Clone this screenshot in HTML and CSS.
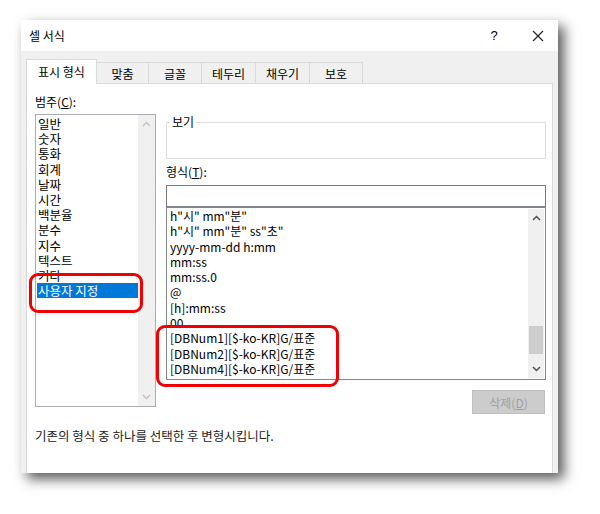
FILE: index.html
```html
<html><head>
<meta charset="UTF-8">
<meta name="viewport" content="width=device-width, initial-scale=1.0">
<title>셀 서식</title>
<link rel="stylesheet" href="styles.css">
</head>
<body>
<div class="dialog">
    <div class="titlebar">
        <span class="title">셀 서식</span>
        <span class="tb-btn help">?</span>
        <span class="tb-btn close">
            <svg width="12" height="12" viewBox="0 0 12 12"><path d="M1 1L11 11M11 1L1 11" stroke="#222" stroke-width="1.2" fill="none"/></svg>
        </span>
    </div>

    <div class="dlg-body">
        <div class="tabs">
            <div class="tab active">표시 형식</div>
            <div class="tab w52">맞춤</div>
            <div class="tab w53">글꼴</div>
            <div class="tab w54">테두리</div>
            <div class="tab w54">채우기</div>
            <div class="tab w53">보호</div>
        </div>

        <div class="panel">
            <div class="cols">
                <!-- category list -->
                <div class="col-left">
                    <div class="label">범주(<u>C</u>):</div>
                    <div class="listbox cat-list">
                        <ul class="items">
                            <li>일반</li>
                            <li>숫자</li>
                            <li>통화</li>
                            <li>회계</li>
                            <li>날짜</li>
                            <li>시간</li>
                            <li>백분율</li>
                            <li>분수</li>
                            <li>지수</li>
                            <li>텍스트</li>
                            <li>기타</li>
                            <li class="selected">사용자 지정</li>
                        </ul>
                        <div class="vscroll off">
                            <svg class="arrow" width="9" height="6" viewBox="0 0 9 6"><path d="M1 5L4.5 1.5L8 5" stroke="#c2c2c2" stroke-width="1.5" fill="none"/></svg>
                            <div class="track"></div>
                            <svg class="arrow" width="9" height="6" viewBox="0 0 9 6"><path d="M1 1L4.5 4.5L8 1" stroke="#c2c2c2" stroke-width="1.5" fill="none"/></svg>
                        </div>
                    </div>
                </div>

                <!-- format side -->
                <div class="col-right">
                    <fieldset class="preview"><legend>보기</legend></fieldset>
                    <div class="label fmt-label">형식(<u>T</u>):</div>
                    <div class="textbox"></div>
                    <div class="listbox fmt-list">
                        <ul class="items">
                            <li>h"시" mm"분"</li>
                            <li>h"시" mm"분" ss"초"</li>
                            <li>yyyy-mm-dd h:mm</li>
                            <li>mm:ss</li>
                            <li>mm:ss.0</li>
                            <li>@</li>
                            <li>[h]:mm:ss</li>
                            <li>00</li>
                            <li>[DBNum1][$-ko-KR]G/표준</li>
                            <li>[DBNum2][$-ko-KR]G/표준</li>
                            <li>[DBNum4][$-ko-KR]G/표준</li>
                        </ul>
                        <div class="vscroll">
                            <svg class="arrow" width="9" height="6" viewBox="0 0 9 6"><path d="M1 5L4.5 1.5L8 5" stroke="#505050" stroke-width="1.5" fill="none"/></svg>
                            <div class="track"><div class="thumb"></div></div>
                            <svg class="arrow" width="9" height="6" viewBox="0 0 9 6"><path d="M1 1L4.5 4.5L8 1" stroke="#505050" stroke-width="1.5" fill="none"/></svg>
                        </div>
                    </div>
                    <button class="btn-delete" disabled>삭제(<u>D</u>)</button>
                </div>
            </div>

            <p class="note">기존의 형식 중 하나를 선택한 후 변형시킵니다.</p>

            <!-- red highlight marks drawn over the dialog -->
            <div class="mark mark-cat"></div>
            <div class="mark mark-fmt"></div>
        </div>
    </div>
</div>
</body></html>
```

FILE: styles.css
```css
body {
    margin: 0;
    background: #fff;
    font-family: "Noto Sans CJK KR", "Noto Sans", sans-serif;
    font-size: 12px;
    color: #000;
}

.dialog {
    margin: 20px 0 0 21px;
    width: 537px;
    height: 453px;
    background: #f0f0f0;
    box-shadow: 6px 6px 12px rgba(0, 0, 0, 0.65);
}

.titlebar {
    height: 31px;
    background: #fff;
    display: flex;
    align-items: center;
}

.title {
    flex: 1;
    padding-left: 8px;
}

.tb-btn {
    height: 31px;
    display: flex;
    justify-content: center;
    align-items: center;
}

.help {
    width: 44px;
    margin-right: 2px;
    font-family: "Liberation Sans", sans-serif;
    font-size: 13px;
}

.close {
    width: 40px;
}

.dlg-body {
    padding: 8px 5px 0 5px;
}

.tabs {
    display: flex;
    align-items: flex-end;
    height: 24px;
}

.tab {
    box-sizing: border-box;
    height: 21px;
    border: 1px solid #d9d9d9;
    border-bottom: none;
    margin-left: -1px;
    display: flex;
    justify-content: center;
    align-items: center;
    background: #f0f0f0;
}

.tab.active {
    width: 71px;
    height: 25px;
    margin-left: 0;
    margin-bottom: -1px;
    background: #fff;
    position: relative;
    z-index: 1;
    padding-bottom: 2px;
}

.w52 { width: 53px; }
.w53 { width: 54px; }
.w54 { width: 55px; }

.panel {
    position: relative;
    box-sizing: border-box;
    width: 527px;
    height: 390px;
    background: #fff;
    border: 1px solid #d9d9d9;
    border-bottom: none;
    padding: 10px 0 0 8px;
}

.cols {
    display: flex;
    gap: 10px;
}

.col-left {
    width: 121px;
}

.col-right {
    width: 380px;
    display: flex;
    flex-direction: column;
}

.label {
    line-height: 16px;
    height: 16px;
}

.listbox {
    box-sizing: border-box;
    border: 1px solid #828790;
    background: #fff;
    display: flex;
    overflow: hidden;
}

.cat-list {
    margin-top: 4px;
    height: 293px;
    border-color: #abadb3;
}

.items {
    list-style: none;
    margin: 0;
    padding: 1px 0 0 1px;
    flex: 1;
}

.items li {
    line-height: 15.2px;
    height: 15.2px;
    padding-left: 1px;
    white-space: nowrap;
}

.cat-list .items li {
    font-size: 12.5px;
}

.items li.selected {
    background: #0078d7;
    color: #fff;
}

.vscroll {
    width: 17px;
    background: #f0f0f0;
    display: flex;
    flex-direction: column;
    align-items: center;
}

.vscroll .arrow {
    margin: 6px 0;
}

.vscroll .track {
    flex: 1;
    width: 100%;
    display: flex;
    flex-direction: column;
    justify-content: flex-end;
}

.thumb {
    height: 28px;
    margin: 0 1px 6px 1px;
    background: #cdcdcd;
}

.preview {
    box-sizing: border-box;
    margin: 22px 0 0 0;
    padding: 0;
    height: 43px;
    border: 1px solid #dcdcdc;
}

.preview legend {
    margin-left: 3px;
    padding: 0 2px;
    line-height: 12px;
}

.fmt-label {
    margin-top: 5px;
}

.textbox {
    box-sizing: border-box;
    margin-top: 5px;
    height: 22px;
    border: 1px solid #7a7a7a;
    border-bottom-color: #828790;
}

.fmt-list {
    height: 173px;
}

.fmt-list .items {
    padding: 0 0 0 2px;
}

.fmt-list .items li {
    line-height: 15.3px;
    height: 15.3px;
}

.fmt-list .vscroll {
    width: 16px;
    margin: 1px 1px 1px 0;
}

.btn-delete {
    align-self: flex-end;
    margin: 10px 1px 0 0;
    width: 73px;
    height: 24px;
    background: #cccccc;
    border: 1px solid #bfbfbf;
    color: #a0a0a0;
    font-family: inherit;
    font-size: 12px;
    padding: 0;
}

.note {
    margin: 14px 0 0 0;
    line-height: 16px;
    font-size: 12.5px;
    color: #222;
}

.mark {
    position: absolute;
    box-sizing: border-box;
    border: 3px solid #f00000;
    border-radius: 9px;
}

.mark-cat {
    left: 2px;
    top: 189px;
    width: 114px;
    height: 40px;
}

.mark-fmt {
    left: 129px;
    top: 241px;
    width: 183px;
    height: 62px;
}
```
